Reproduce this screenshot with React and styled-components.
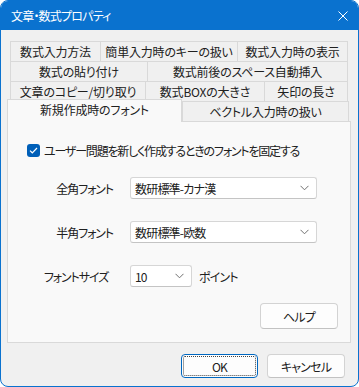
import styled, { createGlobalStyle } from "styled-components";

const GlobalStyle = createGlobalStyle`
  html, body {
    margin: 0;
    padding: 0;
    background: #ffffff;
  }
  body {
    font-family: "Noto Sans CJK JP", "Noto Sans", sans-serif;
    font-size: 12px;
    color: #202020;
    font-feature-settings: "palt";
    letter-spacing: -0.8px;
  }
`;

const Window = styled.div`
  box-sizing: border-box;
  width: 359px;
  height: 387px;
  border: 1px solid #0a72cf;
  border-radius: 8px;
  overflow: hidden;
  background: #f0f0f0;
  display: flex;
  flex-direction: column;
`;

const TitleBar = styled.div`
  flex-shrink: 0;
  height: 29px;
  background: #0a72cf;
  color: #ffffff;
  display: flex;
  align-items: center;
  justify-content: space-between;
  padding: 0 10px 0 10px;
  font-size: 12px;
`;

const Body = styled.div`
  padding: 11px 7px 0 6px;
  display: flex;
  flex-direction: column;
`;

const TabRow = styled.div`
  display: flex;
  align-items: flex-end;
  height: 20px;
  padding-left: 3px;
`;

const Tab = styled.div`
  box-sizing: border-box;
  position: relative;
  width: ${(p) => p.$w}px;
  height: ${(p) => (p.$active ? 23 : 20)}px;
  margin-left: ${(p) => (p.$active ? -3 : 0)}px;
  margin-bottom: ${(p) => (p.$active ? -1 : 0)}px;
  z-index: ${(p) => (p.$active ? 1 : 0)};
  border-top: 1px solid #d9d9d9;
  border-left: 1px solid #d9d9d9;
  border-right: ${(p) => (p.$last || p.$active ? "1px solid #d9d9d9" : "none")};
  background: ${(p) => (p.$active ? "#f9f9f9" : "#f0f0f0")};
  display: flex;
  justify-content: center;
  align-items: ${(p) => (p.$active ? "flex-start" : "center")};
  padding-top: ${(p) => (p.$active ? 2 : 0)}px;
  white-space: nowrap;
  line-height: 16px;
  letter-spacing: -0.2px;
`;

const Panel = styled.div`
  box-sizing: border-box;
  height: 222px;
  border: 1px solid #d9d9d9;
  background: #f9f9f9;
  padding: 22px 12px 0 19px;
  display: flex;
  flex-direction: column;
`;

const CheckRow = styled.label`
  display: flex;
  align-items: center;
  gap: 4px;
  height: 13px;
  line-height: 13px;
  letter-spacing: -1.2px;
`;

const CheckBox = styled.span`
  width: 13px;
  height: 13px;
  border-radius: 3px;
  background: #005fb8;
  display: flex;
  align-items: center;
  justify-content: center;
`;

const FormGrid = styled.div`
  margin-top: 20px;
  display: grid;
  grid-template-columns: 86px auto;
  column-gap: 17px;
  row-gap: 22px;
  align-items: center;
`;

const Label = styled.div`
  text-align: right;
  padding-right: ${(p) => p.$pad || 0}px;
  white-space: nowrap;
  letter-spacing: -1.1px;
`;

const Select = styled.div`
  box-sizing: border-box;
  width: ${(p) => p.$w}px;
  height: 22px;
  background: #ffffff;
  border: 1px solid #d6d6d6;
  border-bottom-color: #c4c4c4;
  border-radius: 3px;
  display: flex;
  align-items: center;
  justify-content: space-between;
  padding: 0 7px 0 4px;
`;

const Inline = styled.div`
  display: flex;
  align-items: center;
  gap: 7px;
`;

const HelpRow = styled.div`
  margin-top: 16px;
  display: flex;
  justify-content: flex-end;
`;

const Button = styled.div`
  box-sizing: border-box;
  position: relative;
  width: ${(p) => p.$w}px;
  height: ${(p) => p.$h}px;
  background: #fdfdfd;
  border: 1px solid ${(p) => (p.$default ? "#0067c0" : "#d3d3d3")};
  border-bottom-color: ${(p) => (p.$default ? "#0067c0" : "#c2c2c2")};
  border-radius: 4px;
  display: flex;
  align-items: center;
  justify-content: center;
  ${(p) =>
    p.$default &&
    `
    &::after {
      content: "";
      position: absolute;
      inset: 1px;
      border: 1px dotted #444;
      border-radius: 2px;
    }
  `}
`;

const Footer = styled.div`
  display: flex;
  justify-content: flex-end;
  gap: 9px;
  padding: 11px 6px 0 0;
`;

function Chevron() {
  return (
    <svg width="9" height="6" viewBox="0 0 9 6">
      <path d="M0.5 0.8 L4.5 4.8 L8.5 0.8" fill="none" stroke="#707070" strokeWidth="1" />
    </svg>
  );
}

export default function App() {
  return (
    <>
      <GlobalStyle />
      <Window>
        <TitleBar>
          <span>文章・数式プロパティ</span>
          <svg width="10" height="10" viewBox="0 0 10 10">
            <path d="M0.5 0.5 L9.5 9.5 M9.5 0.5 L0.5 9.5" stroke="#ffffff" strokeWidth="1" />
          </svg>
        </TitleBar>
        <Body>
          <TabRow>
            <Tab $w={90}>数式入力方法</Tab>
            <Tab $w={137}>簡単入力時のキーの扱い</Tab>
            <Tab $w={111} $last>数式入力時の表示</Tab>
          </TabRow>
          <TabRow>
            <Tab $w={137}>数式の貼り付け</Tab>
            <Tab $w={201} $last>数式前後のスペース自動挿入</Tab>
          </TabRow>
          <TabRow>
            <Tab $w={135}>文章のコピー/切り取り</Tab>
            <Tab $w={119}>数式BOXの大きさ</Tab>
            <Tab $w={84} $last>矢印の長さ</Tab>
          </TabRow>
          <TabRow>
            <Tab $w={175} $active>新規作成時のフォント</Tab>
            <Tab $w={167} $last>ベクトル入力時の扱い</Tab>
          </TabRow>
          <Panel>
            <CheckRow>
              <CheckBox>
                <svg width="9" height="7" viewBox="0 0 9 7">
                  <path d="M1 3.6 L3.3 5.8 L8 1" fill="none" stroke="#ffffff" strokeWidth="1.2" />
                </svg>
              </CheckBox>
              <span>ユーザー問題を新しく作成するときのフォントを固定する</span>
            </CheckRow>
            <FormGrid>
              <Label>全角フォント</Label>
              <Select $w={187}>
                <span>数研標準-カナ漢</span>
                <Chevron />
              </Select>
              <Label>半角フォント</Label>
              <Select $w={187}>
                <span>数研標準-欧数</span>
                <Chevron />
              </Select>
              <Label $pad={5}>フォントサイズ</Label>
              <Inline>
                <Select $w={62}>
                  <span>10</span>
                  <Chevron />
                </Select>
                <span>ポイント</span>
              </Inline>
            </FormGrid>
            <HelpRow>
              <Button $w={78} $h={26}>ヘルプ</Button>
            </HelpRow>
          </Panel>
          <Footer>
            <Button $w={77} $h={24} $default>OK</Button>
            <Button $w={78} $h={24}>キャンセル</Button>
          </Footer>
        </Body>
      </Window>
    </>
  );
}
